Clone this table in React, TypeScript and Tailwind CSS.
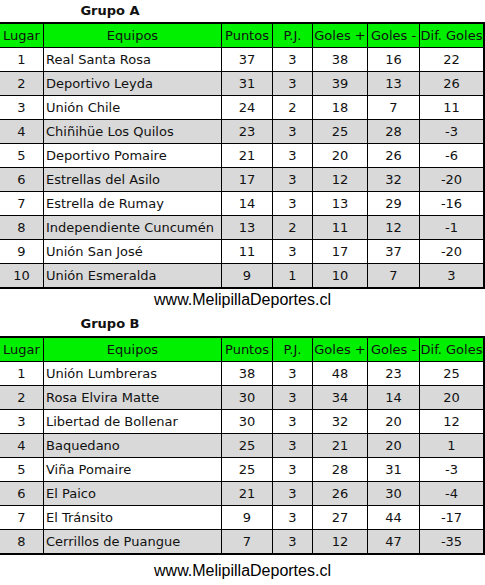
import React from 'react'

type Row = [number, string, number, number, number, number, number]

const grupoA: Row[] = [
  [1, 'Real Santa Rosa', 37, 3, 38, 16, 22],
  [2, 'Deportivo Leyda', 31, 3, 39, 13, 26],
  [3, 'Unión Chile', 24, 2, 18, 7, 11],
  [4, 'Chiñihüe Los Quilos', 23, 3, 25, 28, -3],
  [5, 'Deportivo Pomaire', 21, 3, 20, 26, -6],
  [6, 'Estrellas del Asilo', 17, 3, 12, 32, -20],
  [7, 'Estrella de Rumay', 14, 3, 13, 29, -16],
  [8, 'Independiente Cuncumén', 13, 2, 11, 12, -1],
  [9, 'Unión San José', 11, 3, 17, 37, -20],
  [10, 'Unión Esmeralda', 9, 1, 10, 7, 3],
]

const grupoB: Row[] = [
  [1, 'Unión Lumbreras', 38, 3, 48, 23, 25],
  [2, 'Rosa Elvira Matte', 30, 3, 34, 14, 20],
  [3, 'Libertad de Bollenar', 30, 3, 32, 20, 12],
  [4, 'Baquedano', 25, 3, 21, 20, 1],
  [5, 'Viña Pomaire', 25, 3, 28, 31, -3],
  [6, 'El Paico', 21, 3, 26, 30, -4],
  [7, 'El Tránsito', 9, 3, 27, 44, -17],
  [8, 'Cerrillos de Puangue', 7, 3, 12, 47, -35],
]

const headers = ['Lugar', 'Equipos', 'Puntos', 'P.J.', 'Goles +', 'Goles -', 'Dif. Goles']
const widths = ['w-[44px]', 'w-[178px]', 'w-[51px]', 'w-[40px]', 'w-[55px]', 'w-[52px]', 'flex-1']

function Tabla({ rows }: { rows: Row[] }) {
  return (
    <div className="w-[487px] -ml-[2px] border-t-2 border-b-2 border-x-2 border-black">
      <div className="flex h-[24px] border-b border-black bg-[#00f000]">
        {headers.map((h, i) => (
          <div
            key={h}
            className={`${widths[i]} ${i < 6 ? 'border-r border-black' : ''} flex items-center justify-center whitespace-nowrap`}
          >
            {h}
          </div>
        ))}
      </div>
      {rows.map((r, idx) => (
        <div
          key={r[0]}
          className={`flex ${idx < rows.length - 1 ? 'h-[24px] border-b border-black' : 'h-[23px]'} ${idx % 2 === 1 ? 'bg-[#d9d9d9]' : 'bg-white'}`}
        >
          {r.map((v, i) => (
            <div
              key={i}
              className={`${widths[i]} ${i < 6 ? 'border-r border-black' : ''} flex items-center whitespace-nowrap ${i === 1 ? 'justify-start pl-[2px]' : 'justify-center'}`}
            >
              {v}
            </div>
          ))}
        </div>
      ))}
    </div>
  )
}

function Sitio() {
  return (
    <div className="h-[22px] flex items-center justify-center text-[16px] text-black" style={{ fontFamily: '"Liberation Sans", Arial, sans-serif' }}>
      www.MelipillaDeportes.cl
    </div>
  )
}

export default function App() {
  return (
    <div className="w-[485px] h-[585px] bg-white overflow-hidden text-[13px] text-[#111]" style={{ fontFamily: '"DejaVu Sans", Verdana, sans-serif' }}>
      <div className="h-[22px] w-[220px] flex items-center justify-center font-bold">Grupo A</div>
      <Tabla rows={grupoA} />
      <Sitio />
      <div className="h-[25px] w-[220px] flex items-center justify-center font-bold">Grupo B</div>
      <Tabla rows={grupoB} />
      <div className="h-[5px]" />
      <Sitio />
    </div>
  )
}
